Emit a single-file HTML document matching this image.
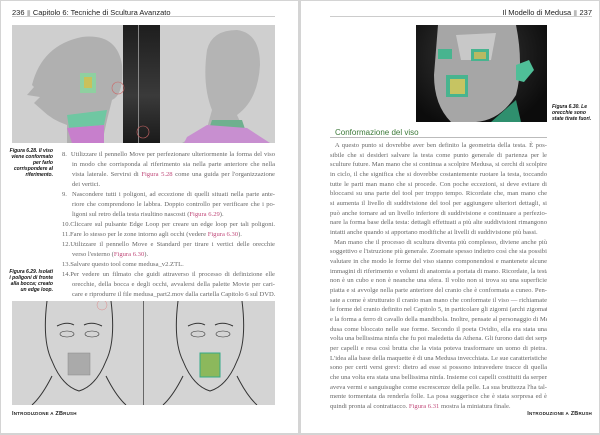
<!DOCTYPE html>
<html><head><meta charset="utf-8"><style>
*{margin:0;padding:0;box-sizing:border-box}
body{width:600px;height:435px;background:#d4d4d4;position:relative;overflow:hidden;font-family:"Liberation Serif",serif}
.pg{position:absolute;top:1px;height:432px;background:#fff}
.a{position:absolute}
.hd{font-family:"Liberation Sans",sans-serif;font-size:7.5px;color:#222;white-space:nowrap}
.rule{position:absolute;height:1px;background:#ccc}
.ln{position:absolute;font-size:6.6px;color:#666;white-space:nowrap;text-align:justify;text-align-last:justify;overflow:hidden;height:10px;line-height:10px}
.pk{color:#c04a7a}
.cap{position:absolute;font-family:"Liberation Sans",sans-serif;font-style:italic;font-size:5px;line-height:6px;color:#111;font-weight:bold;text-align:right}
.ft{font-family:"Liberation Sans",sans-serif;font-size:5.5px;color:#222;letter-spacing:.2px;font-weight:bold}
</style></head><body>
<div class="pg" style="left:1px;width:297px"></div>
<div class="pg" style="left:301px;width:298px"></div>
<div class="a hd" style="left:12px;top:8px">236 <span style="color:#bbb">▮</span> Capitolo 6: Tecniche di Scultura Avanzato</div>
<div class="rule" style="left:12px;top:16px;width:263px"></div>
<div class="a" style="left:12px;top:25px;width:263px;height:118px;background:#cfcfcf"></div>
<div class="a" style="left:123px;top:25px;width:37px;height:118px;background:linear-gradient(#1e1e1e,#3a3a3a 60%,#1a1a1a)"></div>
<div class="a" style="left:138px;top:25px;width:1px;height:118px;background:#888"></div>
<svg class="a" style="left:12px;top:25px" width="263" height="118">
<path d="M20 60 Q30 20 70 12 Q105 8 110 40 Q112 70 100 75 L95 95 L90 118 L55 118 L55 100 Q40 95 30 85 L22 78 L28 72 L15 70 L22 62 Z" fill="#b0b0b0"/>
<path d="M55 90 L95 85 L92 100 L57 103 Z" fill="#6fc7a2"/>
<path d="M55 103 L92 100 L92 118 L60 118 Z" fill="#c77fcc"/>
<rect x="68" y="48" width="16" height="20" fill="#8fd0a0"/><rect x="72" y="52" width="8" height="11" fill="#c9c15a"/>
<path d="M195 25 Q200 5 225 5 Q248 8 248 40 Q246 75 225 90 L232 105 L255 118 L170 118 L195 103 L200 85 Q190 60 195 25 Z" fill="#b4b4b4"/>
<path d="M200 95 L230 95 L235 110 L195 110 Z" fill="#6fb08f"/>
<path d="M175 112 L195 100 L235 103 L258 118 L172 118 Z" fill="#c88fd0"/>
<circle cx="106" cy="63" r="6" fill="none" stroke="#c66" stroke-width=".6"/>
<circle cx="131" cy="107" r="6" fill="none" stroke="#c66" stroke-width=".6"/>
</svg>
<div class="cap" style="left:8px;top:148px;width:45px">Figura 6.28. Il viso viene conformato per farlo corrispondere al riferimento.</div>
<div class="ln" style="left:62px;top:150px;width:213px">8.&nbsp; Utilizzare il pennello Move per perfezionare ulteriormente la forma del viso</div>
<div class="ln" style="left:72px;top:160px;width:203px">in modo che corrisponda al riferimento sia nella parte anteriore che nella</div>
<div class="ln" style="left:72px;top:170px;width:203px">vista laterale. Servirsi di <span class="pk">Figura 5.28</span> come una guida per l'organizzazione</div>
<div class="ln" style="left:72px;top:180px;text-align-last:left">dei vertici.</div>
<div class="ln" style="left:62px;top:190px;width:213px">9.&nbsp; Nascondere tutti i poligoni, ad eccezione di quelli situati nella parte ante-</div>
<div class="ln" style="left:72px;top:200px;width:203px">riore che comprendono le labbra. Doppio controllo per verificare che i po-</div>
<div class="ln" style="left:72px;top:210px;text-align-last:left">ligoni sul retro della testa risultino nascosti (<span class="pk">Figura 6.29</span>).</div>
<div class="ln" style="left:62px;top:220px;width:213px">10.Cliccare sul pulsante Edge Loop per creare un edge loop per tali poligoni.</div>
<div class="ln" style="left:62px;top:230px;text-align-last:left">11.Fare lo stesso per le zone intorno agli occhi (vedere <span class="pk">Figura 6.30</span>).</div>
<div class="ln" style="left:62px;top:240px;width:213px">12.Utilizzare il pennello Move e Standard per tirare i vertici delle orecchie</div>
<div class="ln" style="left:72px;top:250px;text-align-last:left">verso l'esterno (<span class="pk">Figura 6.30</span>).</div>
<div class="ln" style="left:62px;top:260px;text-align-last:left">13.Salvare questo tool come medusa_v2.ZTL.</div>
<div class="ln" style="left:62px;top:270px;width:213px">14.Per vedere un filmato che guidi attraverso il processo di definizione elle</div>
<div class="ln" style="left:72px;top:280px;width:203px">orecchie, della bocca e degli occhi, avvalersi della palette Movie per cari-</div>
<div class="ln" style="left:72px;top:290px;width:203px">care e riprodurre il file medusa_part2.mov dalla cartella Capitolo 6 sul DVD.</div>
<div class="cap" style="left:8px;top:269px;width:45px">Figura 6.29. Isolati i poligoni di fronte alla bocca; creato un edge loop.</div>
<div class="a" style="left:12px;top:301px;width:263px;height:104px;background:#d4d4d4"></div>
<div class="a" style="left:143px;top:301px;width:1px;height:104px;background:#666"></div>
<svg class="a" style="left:12px;top:301px" width="263" height="104" fill="none" stroke="#333" stroke-width="1">
<path d="M35 0 Q30 40 40 60 Q50 85 67 90 Q84 85 94 60 Q104 40 99 0"/>
<path d="M20 104 Q30 95 40 75 M114 104 Q104 95 94 75"/>
<path d="M45 25 Q55 20 62 24 M72 24 Q80 20 90 25"/>
<ellipse cx="55" cy="33" rx="7" ry="3" stroke-width=".6"/><ellipse cx="80" cy="33" rx="7" ry="3" stroke-width=".6"/>
<path d="M166 0 Q161 40 171 60 Q181 85 198 90 Q215 85 225 60 Q235 40 230 0"/>
<path d="M151 104 Q161 95 171 75 M245 104 Q235 95 225 75"/>
<path d="M176 25 Q186 20 193 24 M203 24 Q211 20 221 25"/>
<ellipse cx="186" cy="33" rx="7" ry="3" stroke-width=".6"/><ellipse cx="211" cy="33" rx="7" ry="3" stroke-width=".6"/>
<rect x="56" y="52" width="22" height="22" fill="#aaa" stroke="#888" stroke-width=".5"/>
<rect x="188" y="52" width="20" height="24" fill="#8cb85c" stroke="#3a8" stroke-width="1"/>
<circle cx="90" cy="4" r="5" stroke="#d88" stroke-width=".5"/>
</svg>
<div class="a ft" style="left:12px;top:411px">I<span style="font-size:4.5px">NTRODUZIONE A</span> ZB<span style="font-size:4.5px">RUSH</span></div>
<div class="a hd" style="left:480px;top:8px;width:112px;text-align:right">Il Modello di Medusa <span style="color:#bbb">▮</span> 237</div>
<div class="rule" style="left:330px;top:16px;width:262px"></div>
<div class="a" style="left:416px;top:25px;width:131px;height:97px;background:radial-gradient(ellipse at 45% 30%,#3a3a3a,#0c0c0c 80%)"></div>
<svg class="a" style="left:416px;top:25px" width="131" height="97">
<path d="M22 0 L100 0 Q108 40 100 70 Q85 95 60 97 L35 97 Q18 80 18 50 Z" fill="#a6a6a6"/>
<path d="M40 10 L80 8 L75 35 L45 35 Z" fill="#c8c8c8"/>
<path d="M100 40 L113 35 L118 45 L108 57 L100 55 Z" fill="#4fbf98"/>
<path d="M75 97 L100 75 L105 97 Z" fill="#2f8f6e"/>
<rect x="30" y="50" width="22" height="22" fill="#48b48f"/><rect x="34" y="54" width="15" height="15" fill="#c6c462"/>
<rect x="55" y="24" width="18" height="12" fill="#48b48f"/><rect x="58" y="27" width="12" height="7" fill="#b9b962"/>
<rect x="22" y="24" width="14" height="10" fill="#48b48f"/>
</svg>
<div class="cap" style="left:552px;top:104px;width:42px;text-align:left">Figura 6.30. Le orecchie sono state tirate fuori.</div>
<div class="a" style="left:335px;top:128px;font-family:'Liberation Sans',sans-serif;font-size:8px;color:#3d7a3a">Conformazione del viso</div>
<div class="rule" style="left:330px;top:137px;width:217px;background:#bbb"></div>
<div class="ln" style="left:330px;top:141px;width:217px">&nbsp;&nbsp;A questo punto si dovrebbe aver ben definito la geometria della testa. È pos-</div>
<div class="ln" style="left:330px;top:150.6px;width:217px">sibile che si desideri salvare la testa come punto generale di partenza per le</div>
<div class="ln" style="left:330px;top:160.3px;width:217px">sculture future. Man mano che si continua a scolpire Medusa, si cerchi di scolpire</div>
<div class="ln" style="left:330px;top:170px;width:217px">in ciclo, il che significa che si dovrebbe costantemente ruotare la testa, toccando</div>
<div class="ln" style="left:330px;top:179.6px;width:217px">tutte le parti man mano che si procede. Con poche eccezioni, si deve evitare di</div>
<div class="ln" style="left:330px;top:189.3px;width:217px">bloccarsi su una parte del tool per troppo tempo. Ricordate che, man mano che</div>
<div class="ln" style="left:330px;top:199px;width:217px">si aumenta il livello di suddivisione del tool per aggiungere ulteriori dettagli, si</div>
<div class="ln" style="left:330px;top:208.6px;width:217px">può anche tornare ad un livello inferiore di suddivisione e continuare a perfezio-</div>
<div class="ln" style="left:330px;top:218.3px;width:217px">nare la forma base della testa: dettagli effettuati a più alte suddivisioni rimangono</div>
<div class="ln" style="left:330px;top:228px;text-align-last:left">intatti anche quando si apportano modifiche ai livelli di suddivisione più bassi.</div>
<div class="ln" style="left:330px;top:237.6px;width:217px">&nbsp;&nbsp;Man mano che il processo di scultura diventa più complesso, diviene anche più</div>
<div class="ln" style="left:330px;top:247.3px;width:217px">soggettivo e l'istruzione più generale. Zoomate spesso indietro così che sia possibile</div>
<div class="ln" style="left:330px;top:257px;width:217px">valutare in che modo le forme del viso stanno componendosi e mantenete alcune</div>
<div class="ln" style="left:330px;top:266.6px;width:217px">immagini di riferimento e volumi di anatomia a portata di mano. Ricordate, la testa</div>
<div class="ln" style="left:330px;top:276.3px;width:217px">non è un cubo e non è neanche una sfera. Il volto non si trova su una superficie</div>
<div class="ln" style="left:330px;top:286px;width:217px">piatta e si avvolge nella parte anteriore del cranio che è conformata a cuneo. Pen-</div>
<div class="ln" style="left:330px;top:295.6px;width:217px">sate a come è strutturato il cranio man mano che conformate il viso — richiamate</div>
<div class="ln" style="left:330px;top:305.3px;width:217px">le forme del cranio definito nel Capitolo 5, in particolare gli zigomi (archi zigomatici)</div>
<div class="ln" style="left:330px;top:315px;width:217px">e la forma a ferro di cavallo della mandibola. Inoltre, pensate al personaggio di Me-</div>
<div class="ln" style="left:330px;top:324.6px;width:217px">dusa come bloccato nelle sue forme. Secondo il poeta Ovidio, ella era stata una</div>
<div class="ln" style="left:330px;top:334.3px;width:217px">volta una bellissima ninfa che fu poi maledetta da Athena. Gli furono dati dei serpenti</div>
<div class="ln" style="left:330px;top:344px;width:217px">per capelli e resa così brutta che la vista poteva trasformare un uomo di pietra.</div>
<div class="ln" style="left:330px;top:353.6px;width:217px">L'idea alla base della maquette è di una Medusa invecchiata. Le sue caratteristiche</div>
<div class="ln" style="left:330px;top:363.3px;width:217px">sono per certi versi grevi: dietro ad esse si possono intravedere tracce di quella</div>
<div class="ln" style="left:330px;top:373px;width:217px">che una volta era stata una bellissima ninfa. Insieme coi capelli costituiti da serpenti,</div>
<div class="ln" style="left:330px;top:382.6px;width:217px">aveva vermi e sanguisughe come escrescenze della pelle. La sua bruttezza l'ha tal-</div>
<div class="ln" style="left:330px;top:392.3px;width:217px">mente tormentata da renderla folle. La posa suggerisce che è stata sorpresa ed è</div>
<div class="ln" style="left:330px;top:402px;text-align-last:left">quindi pronta al contrattacco. <span class="pk">Figura 6.31</span> mostra la miniatura finale.</div>
<div class="a ft" style="left:520px;top:411px;width:72px;text-align:right">I<span style="font-size:4.5px">NTRODUZIONE A</span> ZB<span style="font-size:4.5px">RUSH</span></div>
</body></html>
